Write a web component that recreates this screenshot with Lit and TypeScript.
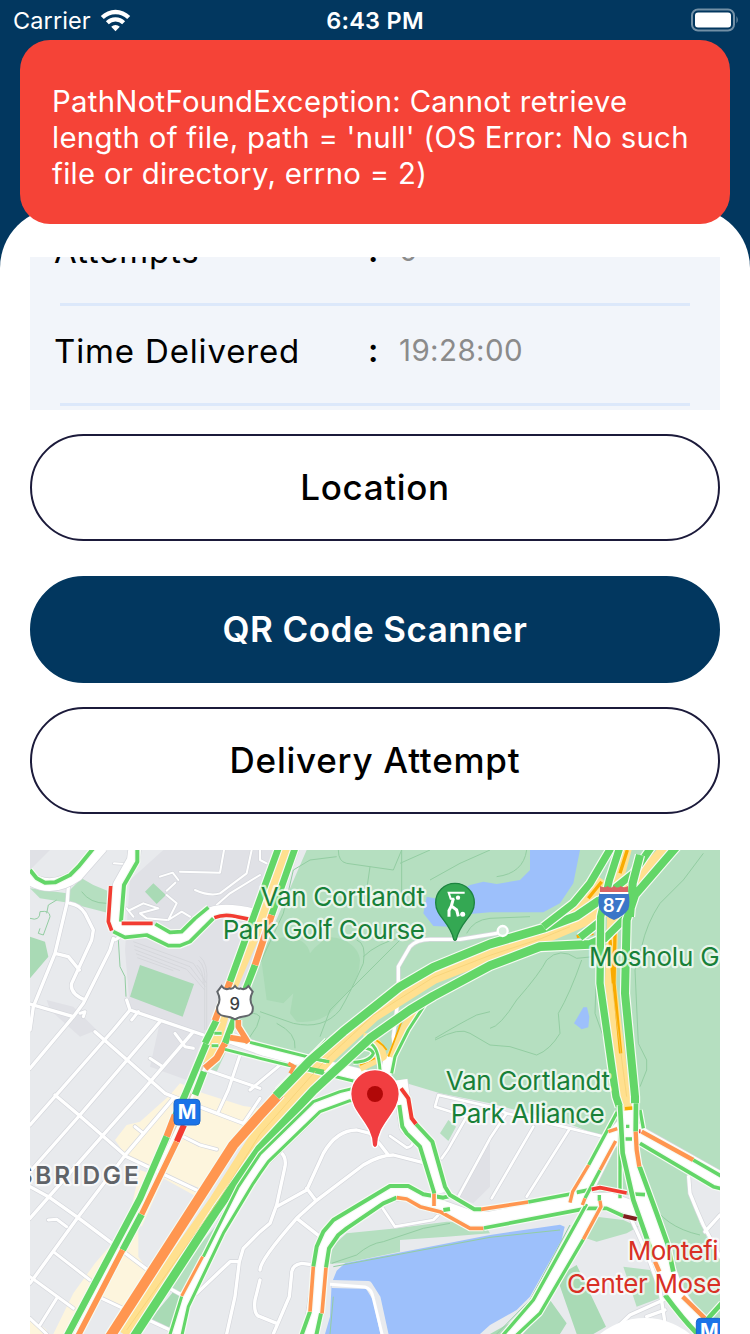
import { LitElement, html, css, svg } from "lit";
import { customElement, property } from "lit/decorators.js";

type Stroke = [color: string, width: number, d: string];

const GREEN = "#63d668";
const ORANGE = "#ff9650";
const RED = "#f23c32";
const DARK = "#811f1f";
const YELLOW = "#ffe08f";
const AMBER = "#f9ab00";

/* Map geometry is expressed in units of one third of a pixel. */
const areas: [string, string][] = [
  ["#e0e1e6", "M300 90L400 0H810L690 330L520 560L300 480L285 300ZM50 450L130 470L200 540L150 560L60 480ZM390 515L520 560L470 690L360 650ZM1275 1040L1380 860V1010L1330 1060ZM0 0H60L0 60Z"],
  ["#b5dfc0", "M830 0H2070V1000L1850 890L1830 830L1720 860L1610 820L1380 760L1230 730L1130 700L980 680L840 615L640 575L630 500L700 300Z"],
  ["#b5dfc0", "M0 115L110 130L155 85L190 105L232 122V188L115 158L30 145ZM590 600L560 665L530 655L560 590Z"],
  ["#a9dab5", "M0 260L45 275L55 320L0 385ZM330 345L492 402L458 500L300 440ZM345 125L370 100L408 135L380 162Z"],
  ["#a9dab5", "M690 300Q720 260 770 262Q830 265 840 310Q850 295 870 280Q890 250 940 270Q985 290 990 330Q985 400 950 430L900 490Q860 520 800 515L780 490L790 430L760 460L710 450Z"],
  ["#fdf5dd", "M255 870L290 825L330 815L420 735L450 700L520 730L640 768L690 775V790L640 825L520 1020L400 965L290 920ZM330 960L400 985L335 1130L300 1090ZM400 985L430 965L510 1025L500 1040ZM325 1090V1220L360 1270L280 1375L210 1345L155 1452H70L130 1330L195 1240ZM0 1400L50 1440V1452H0Z"],
  ["#b5dfc0", "M555 1130L510 1230L450 1345L405 1310ZM890 1242L905 1190L950 1150L1100 1135L1250 1115H1360L1380 1150L1250 1160L1110 1170V1205L950 1238ZM1230 850L1255 810L1278 830L1255 873Z"],
  ["#a9dab5", "M430 1325L462 1340L420 1435L355 1415ZM1580 1280L1640 1245L1728 1430L1690 1452H1640ZM1380 1452L1560 1350L1610 1420L1590 1452Z"],
  ["#b5dfc0", "M1760 870L1860 890L1976 975L1980 1030L2010 1120L2070 1230V1452H2010L1830 1040L1680 1020L1740 900ZM1655 1160L1700 1100L1780 1110L1825 1130L1790 1150L1700 1175ZM1780 1250L1860 1260L1900 1340L1820 1370Z"],
  ["#e8eaed", "M1985 990L2070 1020V1130L2030 1160L1990 1060Z"],
  ["#9dc0fb", "M1500 0H1650L1630 100L1590 160L1540 187H1380L1320 192L1260 230L1210 228L1180 190L1190 140L1240 150L1320 105L1360 95L1400 102L1470 90L1500 60ZM1660 472L1671 472L1678 500L1675 532L1655 538L1632 520ZM885 1452L900 1400L905 1300L920 1262L945 1240L1380 1155L1590 1124L1604 1130L1595 1170L1500 1340L1460 1380L1380 1425L1350 1452Z"],
];

const trails =
  "M690 340L760 190L790 60L840 30L920 20M925 0Q925 35 950 40L1090 60L1115 0M1020 50L1010 120M1115 0V160M1130 250L900 480L870 560M980 270Q1010 280 1000 340Q960 430 930 480Q880 540 790 520L690 485M795 595Q800 550 740 520M1000 320Q1040 280 1120 260M1215 565Q1290 520 1340 495L1380 485M1215 570Q1290 530 1320 550L1380 585M1380 535Q1410 530 1460 450Q1530 370 1550 330Q1590 290 1640 325L1690 320M1655 330Q1620 430 1585 490L1590 550Q1560 600 1520 615L1440 590L1380 585M2020 10L1960 90L1890 160Q1850 220 1835 290L1815 360L1825 580L1850 630V660L1830 710M1700 340L1695 490L1720 560M1200 90L1290 40L1380 0M1310 250Q1330 210 1380 205L1500 200M1490 0Q1480 70 1400 80M1110 40L1200 0M265 270L270 350L285 380L288 440M0 205Q30 215 30 185Q60 180 60 200L40 255L25 250L30 235M50 190L55 165L80 150M155 125Q180 160 230 160M905 1240L980 1215Q1020 1180 1060 1175L1180 1135L1260 1120M910 1250L1380 1162L1590 1140M900 1452L910 1340M1620 1125L1500 1350L1400 1452M1830 1000L1860 1050Q1900 1130 2010 1155M650 500Q670 480 690 500L680 530L650 575";

const minorRoads: Stroke[] = [
  ["#fff", 10, "M115 110L112 155L75 310L10 470L0 540M120 160Q150 165 165 190L190 240L185 270L125 400Q118 430 165 450M75 310L115 320L148 360M0 462L130 500M250 265L240 300L160 460L130 500L0 655"],
  ["#fff", 10, "M290 450L300 480L250 540L0 825M300 480L520 555M390 515L150 795L0 965M490 545L335 725L215 860L0 1105M195 545L405 730L450 748L640 820M75 735L150 798L290 920L510 1025M0 1010L55 1040L140 1100L360 1265M0 1300L145 1100L290 910L430 745"],
  ["#fff", 9, "M70 1205L180 1290M0 1280L130 1375M80 1345L30 1425M0 1405L50 1452M215 1345L285 1378M55 1110L80 1108L110 1130M315 830L340 850M460 860L510 885L560 898M640 820L690 745M565 785L595 720L630 615M530 660L690 715M660 720L780 620M435 550L465 590L490 595M360 625L395 648M305 510L325 485M150 490L165 485L160 500M255 270L270 260"],
  ["#fff", 6, "M252 40L285 42M450 65L570 68L582 0M495 120Q540 140 570 130L650 70L665 0M560 165L600 130L690 75M690 30L710 40M390 80L428 68L445 90M410 122L436 98M300 180L340 160L385 175L330 190L350 205L410 210M290 175L310 200M410 135L440 160L415 210L455 185L480 200M690 0V30"],
  ["#fff", 10, "M690 1145L640 1195L628 1235H600L500 1330M628 1235L615 1340L590 1452M690 1290L675 1350Q670 1395 690 1400L740 1420M750 905Q770 920 765 950L740 1065L720 1120L690 1145M740 1070L830 1020L880 910Q920 840 980 840L1020 850Q1050 880 1075 915M830 1015L858 1052M690 1260Q690 1230 800 1105L855 1055L1000 945Q1050 915 1090 915L1180 938M800 1105L870 1160M855 1245L815 1240Q785 1245 785 1270L778 1340L730 1452"],
  ["#fff", 8, "M1055 1070L1095 1130L1210 1110L1225 1095M1080 858L1130 893Q1145 890 1148 880M1235 925Q1255 900 1270 870L1310 800L1215 770L1225 735L1380 770L1430 790M1285 1040L1380 865L1430 790L1620 835L1720 860M1385 1045L1510 830M1490 1040L1620 835"],
  ["#fff", 10, "M1976 980L1980 1030Q2000 1080 2020 1125L2070 1220M2025 1145L2070 1095M1805 1110L1850 1210L1890 1320L1910 1452M1900 1350L1800 1395L1740 1452M1905 1380L1850 1400M400 1305L455 1335M360 1412L420 1440"],
  ["#fff", 10, "M1095 610L1090 560L1105 440V350L1140 290Q1160 268 1200 268H1290L1400 250"],
];

const majorRoads: Stroke[] = [
  ["#fff", 38, "M-10 80Q60 130 140 75L215 -10M315 -10L310 30L268 105L256 215L285 240L350 235L420 267H455L545 190Q590 172 700 202"],
  ["#fff", 34, "M590 560L700 600L900 652L1060 690M1080 620L1060 700"],
  ["#fff", 34, "M435 1452L465 1360L600 1080L690 945L865 775L960 732L1040 720"],
  ["#fff", 44, "M1110 690L1130 830L1185 880L1230 1030M838 1470L866 1290Q870 1190 920 1130L1070 1033L1135 1028L1200 1060L1330 1107H1380L1660 1050L1740 1050L1850 1090"],
  ["#fff", 48, "M1795 760L1795 900L1845 1060L1905 1240L1940 1330L2020 1440M1780 830L1735 880L1650 1050M1692 1070L1520 1365L1430 1470M1800 830L1840 860L2090 1000"],
];

const highways: Stroke[] = [
  ["#fff", 22, "M530 620L470 760L300 1110L125 1452"],
  ["#ddd3bd", 8, "M530 620L470 760L300 1110L125 1452"],
  [YELLOW, 36, "M775 -10L665 270L600 420L560 560L535 640"],
  [YELLOW, 46, "M280 1452L560 1055L690 850L800 725L890 622L1030 492L1210 379L1380 312L1530 263L1620 225L1720 180L1820 100L1920 -10"],
  [YELLOW, 34, "M1600 220L1670 160L1720 90M1790 -10L1750 140L1742 400L1790 782"],
  [YELLOW, 22, "M1080 620L1130 520L1180 450M1000 560Q1050 565 1060 620L990 655"],
  [AMBER, 5, "M1075 620L1120 500L1150 465M1010 560Q1050 570 1070 600M990 645L1035 625"],
  [AMBER, 10, "M1792 0L1770 70M1755 250L1752 400L1772 610M1740 270L1750 400M1640 260L1690 250M1675 145L1715 95M1785 776L1808 774"],
];

const traffic: Stroke[] = [
  [GREEN, 12, "M0 60L20 85L45 98L75 97L120 75L145 50L190 -5M322 -5V35L282 105L273 215"],
  [RED, 11, "M242 108L235 215L245 242M275 220H368M553 203Q580 192 610 198L660 208"],
  [GREEN, 11, "M250 245L285 262L350 255L415 287H450L480 275L550 205M376 222L420 247L455 245L495 205L535 172"],
  [GREEN, 20, "M745 -5L600 395M530 580L465 735L435 800M795 -5L725 195M675 345L650 410L585 580M522 665L495 735"],
  [GREEN, 20, "M560 510L525 580"],
  [ORANGE, 20, "M725 195L675 345M600 395L555 512M585 580L560 625L525 655M435 795L410 860"],
  [RED, 18, "M462 825L440 875"],
  [GREEN, 20, "M410 860L330 1045L110 1460M335 1093L278 1200"],
  [ORANGE, 17, "M440 875L335 1093M278 1200L143 1460M625 510V530L655 578M600 563L655 572"],
  [GREEN, 9, "M660 577L890 635M585 598L690 625L970 693M553 550H575M545 587H565"],
  [GREEN, 9, "M970 637Q1020 635 1030 610Q1025 595 1000 595L1020 580Q1045 590 1050 660M1085 670L1095 620L1135 540L1200 440L1230 425M740 720L840 620L890 570"],
  [ORANGE, 30, "M240 1460L440 1150L610 885L690 795L750 730"],
  [GREEN, 26, "M738 738L840 632L940 545L1110 410L1210 352L1380 282L1540 235L1640 198L1710 150"],
  [GREEN, 26, "M312 1460L560 1080L690 895L850 722L1020 565L1140 480L1210 438L1380 347L1530 290L1680 283L1720 265"],
  [GREEN, 22, "M1540 230L1630 160L1680 100L1745 -10M1710 150L1750 118L1810 70L1865 -10M1650 262L1710 215M1720 270L1785 205"],
  [GREEN, 22, "M1770 -10L1738 90L1712 200L1710 400L1758 740L1768 770"],
  [GREEN, 24, "M1940 -10L1815 135L1790 210L1785 430L1815 740V760M1830 15L1808 100L1800 200"],
  [GREEN, 9, "M520 1220L625 1010L690 912L850 755L930 725L970 715M455 1340L418 1460M455 1460L475 1370L580 1150L670 1000L690 970L715 935L870 785L960 752H975"],
  [ORANGE, 9, "M518 1220L455 1338"],
  [GREEN, 12, "M813 1460L840 1385M850 1250L860 1190L880 1145L910 1110L1080 1008H1135L1180 1033L1240 1043L1260 1038M858 1460L873 1390M888 1253L897 1195L925 1155L950 1135L1060 1060L1100 1043"],
  [ORANGE, 11, "M840 1385L850 1250M876 1390L888 1253M1100 1043L1130 1047L1170 1070L1230 1085L1320 1135H1360M1212 1030V1068M1353 1078L1495 1056"],
  [GREEN, 12, "M1108 765L1117 830L1130 850L1170 890L1213 1030M1158 822L1207 875L1245 1010L1260 1035L1333 1078H1353M1240 1080L1260 1077"],
  [RED, 12, "M1113 715L1135 745L1145 805L1158 822"],
  [GREEN, 11, "M1495 1056L1622 1032M1640 1027L1685 1018M1362 1134L1670 1075L1730 1075L1780 1098M1810 1032L1845 1034"],
  [GREEN, 10, "M1762 785L1676 945M1710 960L1665 1045M1770 780V1045M1670 1062L1510 1350L1415 1460M1660 1168L1530 1390L1455 1460M1708 1035V1052M1788 829H1798M1786 867H1806M1830 780L1840 835"],
  [ORANGE, 10, "M1676 945L1628 1025L1620 1058M1757 873L1710 960M1665 1045L1657 1065M1710 1052L1713 1070L1660 1168M1735 845L1762 836"],
  [RED, 11, "M1685 1018L1710 1013L1790 1029M1826 838V850"],
  [GREEN, 14, "M1770 765L1778 910L1810 1050L1870 1220M1905 1335Q1960 1410 2010 1460M1818 760L1817 845M1828 948L1880 1090L1912 1180L1930 1265M2030 1410L2075 1360"],
  [ORANGE, 13, "M1817 845L1820 900L1828 950M1875 1235L1888 1265M1958 1340L2025 1405M1835 845L1990 930"],
  [GREEN, 11, "M1990 930L2080 982M1830 880L2050 1010L2080 1018"],
  [DARK, 12, "M1780 1098L1820 1107"],
];

const lines = (items: Stroke[]) =>
  items.map(([c, w, d]) => svg`<path d=${d} stroke=${c} stroke-width=${w}></path>`);
const casing = (items: Stroke[], color: string, extra: number) =>
  items.map(([, w, d]) => svg`<path d=${d} stroke=${color} stroke-width=${w + extra}></path>`);
/* Each traffic stroke carries its own white halo. */
const haloed = (items: Stroke[]) =>
  items.map(
    ([c, w, d]) => svg`<path d=${d} stroke="#f6fbf4" stroke-width=${w + 7}></path><path d=${d} stroke=${c} stroke-width=${w}></path>`
  );

@customElement("traffic-map")
class TrafficMap extends LitElement {
  static styles = css`
    :host { display: block; width: 690px; height: 484px; overflow: hidden; }
    .map { display: block; width: 100%; height: 100%; background: #e8eaed; }
    .net { fill: none; stroke-linejoin: round; }
    .round { stroke-linecap: round; }
    .label {
      font: 400 78px Inter, "Liberation Sans", sans-serif;
      paint-order: stroke;
      stroke: #fff;
      stroke-opacity: 0.7;
      stroke-width: 13px;
      stroke-linejoin: round;
    }
    .park { fill: #188038; }
    .clinic { fill: #d93025; }
    .town { fill: #5f6368; font-size: 73px; font-weight: 600; }
    .sign { font: 500 50px Inter, "Liberation Sans", sans-serif; text-anchor: middle; }
    .route { font-size: 56px; font-weight: 600; }
    .metro { font: 700 60px Inter, "Liberation Sans", sans-serif; text-anchor: middle; fill: #fff; }
  `;
  render() {
    return html`
      <svg class="map" viewBox="0 0 2070 1452" role="img" aria-label="Map">
        ${areas.map(([c, d]) => svg`<path d=${d} fill=${c}></path>`)}
        <g class="net">
          <path d=${trails} stroke="#93cda2" stroke-width="3"></path>
          <path d="M310 275L490 340L530 400M312 287L480 350L526 410M314 299L470 358L524 420M318 311L450 362M322 323L430 362M510 320Q535 340 530 400V540M505 330Q528 350 524 400V540M500 345Q520 360 520 400" stroke="#d0d2d6" stroke-width="2"></path>
          <path d="M905 1302L1015 1305L1040 1345L1065 1460" stroke="#e8eaed" stroke-width="24"></path>
          <path d="M900 1303L1005 1311Q1025 1316 1030 1345L1058 1460" stroke="#fff" stroke-width="9"></path>
        </g>
        <g class="net round">${casing(minorRoads, "#d5d7dc", 4)}${lines(minorRoads)}</g>
        <g class="net">${casing(majorRoads, "#d5d7dc", 4)}${lines(majorRoads)}</g>
        <g class="net">${lines(highways)}${haloed(traffic)}</g>
        <g class="net">
          <path d="M290 1440L560 1060L690 852L800 727L890 626L1030 496L1210 382L1380 316L1530 267L1620 230M1745 400L1790 740" stroke="#f5cf73" stroke-width="2"></path>
          <path d="M858 628L898 635M838 655L882 664" stroke=${GREEN} stroke-width="9"></path>
          <path d="M775 640L792 650L780 670M795 645L785 660" stroke=${ORANGE} stroke-width="11"></path>
        </g>
        <circle cx="1418" cy="243" r="15" fill="#d9eedf" stroke="#fff" stroke-width="7"></circle>
        <circle cx="1845" cy="1618" r="214" fill="#fff"></circle>

        <path d="M575 408Q585 422 598 415Q607 420 615 408Q623 420 632 415Q645 422 655 408L668 425Q655 450 668 470Q672 495 645 499Q625 502 615 508Q605 502 585 499Q558 495 562 470Q575 450 562 425Z" fill="#fff" stroke="#62666b" stroke-width="6"></path>
        <text class="sign" x="614" y="481" fill="#3c4043">9</text>

        <path d="M1708 130H1796Q1801 160 1795 178Q1784 197 1752 210Q1720 197 1709 178Q1702 160 1708 130Z" fill="#3a76c8"></path>
        <path d="M1710 126V108Q1724 116 1733 108Q1743 118 1752 107Q1762 118 1772 108Q1782 116 1794 108V126Z" fill="#d96464"></path>
        <path d="M1709 129H1795" stroke="#fff" stroke-width="6"></path>
        <text class="sign route" x="1752" y="186" fill="#fff">87</text>

        <path d="M1275 100A58 58 0 0 1 1333 158C1333 200 1290 215 1279 268Q1275 274 1271 268C1260 215 1217 200 1217 158A58 58 0 0 1 1275 100Z" fill="#34a853" stroke="#1d8440" stroke-width="4"></path>
        <g fill="none" stroke="#fff" stroke-width="6">
          <path d="M1304 128H1256L1262 146H1273"></path>
          <path d="M1270 146L1264 168L1280 180L1285 199M1265 166L1257 182V200" stroke-width="9"></path>
        </g>
        <circle cx="1284" cy="143" r="6.500" fill="#fff"></circle>
        <circle cx="1298" cy="193" r="7.500" fill="#fff"></circle>

        <rect x="432" y="748" width="78" height="77" rx="12" fill="#1a73e8" stroke="#1765cc" stroke-width="3"></rect>
        <text class="metro" x="471" y="808">M</text>
        <rect x="1999" y="1405" width="78" height="77" rx="12" fill="#1a73e8" stroke="#1765cc" stroke-width="3"></rect>
        <text class="metro" x="2038" y="1463">M</text>

        <text class="label park" x="692" y="167" textLength="493">Van Cortlandt</text>
        <text class="label park" x="578" y="268" textLength="607">Park Golf Course</text>
        <text class="label park" x="1677" y="347" textLength="392">Mosholu G</text>
        <text class="label park" x="1247" y="719" textLength="493">Van Cortlandt</text>
        <text class="label park" x="1262" y="820" textLength="462">Park Alliance</text>
        <text class="label town" x="-40" y="1003" textLength="366">SBRIDGE</text>
        <text class="label clinic" x="1793" y="1230" textLength="273">Montefi</text>
        <text class="label clinic" x="1611" y="1329" textLength="463">Center Mose</text>

        <path d="M1035 659A73 73 0 0 1 1108 732C1108 790 1044 820 1043 886Q1035 900 1027 886C1026 820 962 790 962 732A73 73 0 0 1 1035 659Z" fill="#f13e41" stroke="#fff" stroke-width="4"></path>
        <circle cx="1035" cy="732" r="24" fill="#b10808"></circle>
      </svg>
    `;
  }
}

@customElement("detail-row")
class DetailRow extends LitElement {
  @property() label = "";
  @property() value = "";
  static styles = css`
    :host { display: flex; flex-direction: column; height: 100px; flex: none; }
    .line { display: flex; align-items: center; height: 87px; padding-left: 24px; }
    .name { width: 314px; font-size: 33px; font-weight: 400; letter-spacing: 0.85px; color: #000; }
    .colon { width: 31px; font-size: 32.500px; font-weight: 600; color: #000; }
    .value { font-size: 29.500px; letter-spacing: 0.4px; color: #8b8b8b; font-weight: 400; padding-bottom: 2px; }
    .rule { height: 3px; margin: 9px 30px 0; background: #dce8fa; }
  `;
  render() {
    return html`
      <div class="line">
        <span class="name">${this.label}</span><span class="colon">:</span><span class="value">${this.value}</span>
      </div>
      <div class="rule"></div>
    `;
  }
}

@customElement("app-root")
class AppRoot extends LitElement {
  static styles = css`
    :host {
      display: block;
      position: relative;
      width: 750px;
      height: 1334px;
      overflow: hidden;
      background: #02375f;
      font-family: Inter, "Liberation Sans", sans-serif;
    }
    .status {
      display: grid;
      grid-template-columns: 1fr auto 1fr;
      align-items: center;
      height: 40px;
      padding: 0 11px 0 13px;
      color: #fff;
      font-size: 23.500px;
    }
    .carrier { display: flex; align-items: center; gap: 9px; letter-spacing: 0.1px; font-weight: 400; }
    .clock { font-weight: 600; font-size: 23.500px; letter-spacing: 0.25px; margin-right: 2px; }
    .battery { justify-self: end; }
    .sheet {
      display: flex;
      flex-direction: column;
      height: 1126px;
      box-sizing: border-box;
      margin-top: 168px;
      padding: 49px 30px 0;
      border-radius: 60px 60px 0 0;
      background: #fff;
    }
    .card {
      display: flex;
      flex-direction: column;
      justify-content: flex-end;
      flex: none;
      height: 153px;
      box-sizing: border-box;
      padding-bottom: 3px;
      overflow: hidden;
      background: #f2f5fa;
    }
    .button {
      display: flex;
      align-items: center;
      justify-content: center;
      flex: none;
      width: 690px;
      height: 106.600px;
      box-sizing: border-box;
      padding: 0;
      border: 2px solid #1b1a3a;
      border-radius: 54px;
      background: #fff;
      color: #000;
      font: 500 35px Inter, "Liberation Sans", sans-serif;
      letter-spacing: 0.65px;
    }
    .location { margin-top: 24px; }
    .scan { margin-top: 35.400px; border-color: #02375f; background: #02375f; color: #fff; font-weight: 600; letter-spacing: 0.45px; }
    .attempt { margin-top: 24.600px; letter-spacing: 0.75px; }
    .map { flex: none; margin-top: 36px; }
    .toast {
      position: absolute;
      left: 20px;
      top: 40px;
      width: 710px;
      height: 184px;
      box-sizing: border-box;
      padding: 44px 32px 0;
      border-radius: 30px;
      background: #f54337;
      color: #fff;
      font-size: 29.300px;
      line-height: 36px;
      letter-spacing: 0.31px;
      white-space: nowrap;
    }
  `;
  render() {
    return html`
      <header class="status">
        <span class="carrier">
          Carrier
          <svg width="31" height="23" viewBox="0 0 31 23" fill="#fff">
            <path d="M15.500 22.200L11.200 17.700A6.500 6.500 0 0 1 19.800 17.700Z"></path>
            <path d="M5.900 12.200A13.500 13.500 0 0 1 25.100 12.200L22.200 15.200A9.500 9.500 0 0 0 8.800 15.200Z"></path>
            <path d="M0.800 7A20.700 20.700 0 0 1 30.200 7L27.200 10A16.600 16.600 0 0 0 3.800 10Z"></path>
          </svg>
        </span>
        <span class="clock">6:43 PM</span>
        <svg class="battery" width="49" height="24" viewBox="0 0 49 24">
          <rect x="2" y="1.500" width="42" height="21" rx="6" fill="none" stroke="#7390a6" stroke-width="2"></rect>
          <rect x="5" y="4.500" width="36" height="15" rx="3" fill="#fff"></rect>
          <path d="M46.500 8Q49 12 46.500 15.500Z" fill="#7390a6"></path>
        </svg>
      </header>
      <main class="sheet">
        <section class="card">
          <detail-row label="Attempts" value="0"></detail-row>
          <detail-row label="Time Delivered" value="19:28:00"></detail-row>
        </section>
        <button class="button location">Location</button>
        <button class="button scan">QR Code Scanner</button>
        <button class="button attempt">Delivery Attempt</button>
        <traffic-map class="map"></traffic-map>
      </main>
      <div class="toast" role="alert">
        PathNotFoundException: Cannot retrieve<br />length of file, path = 'null' (OS Error: No such<br />file or directory, errno = 2)
      </div>
    `;
  }
}
